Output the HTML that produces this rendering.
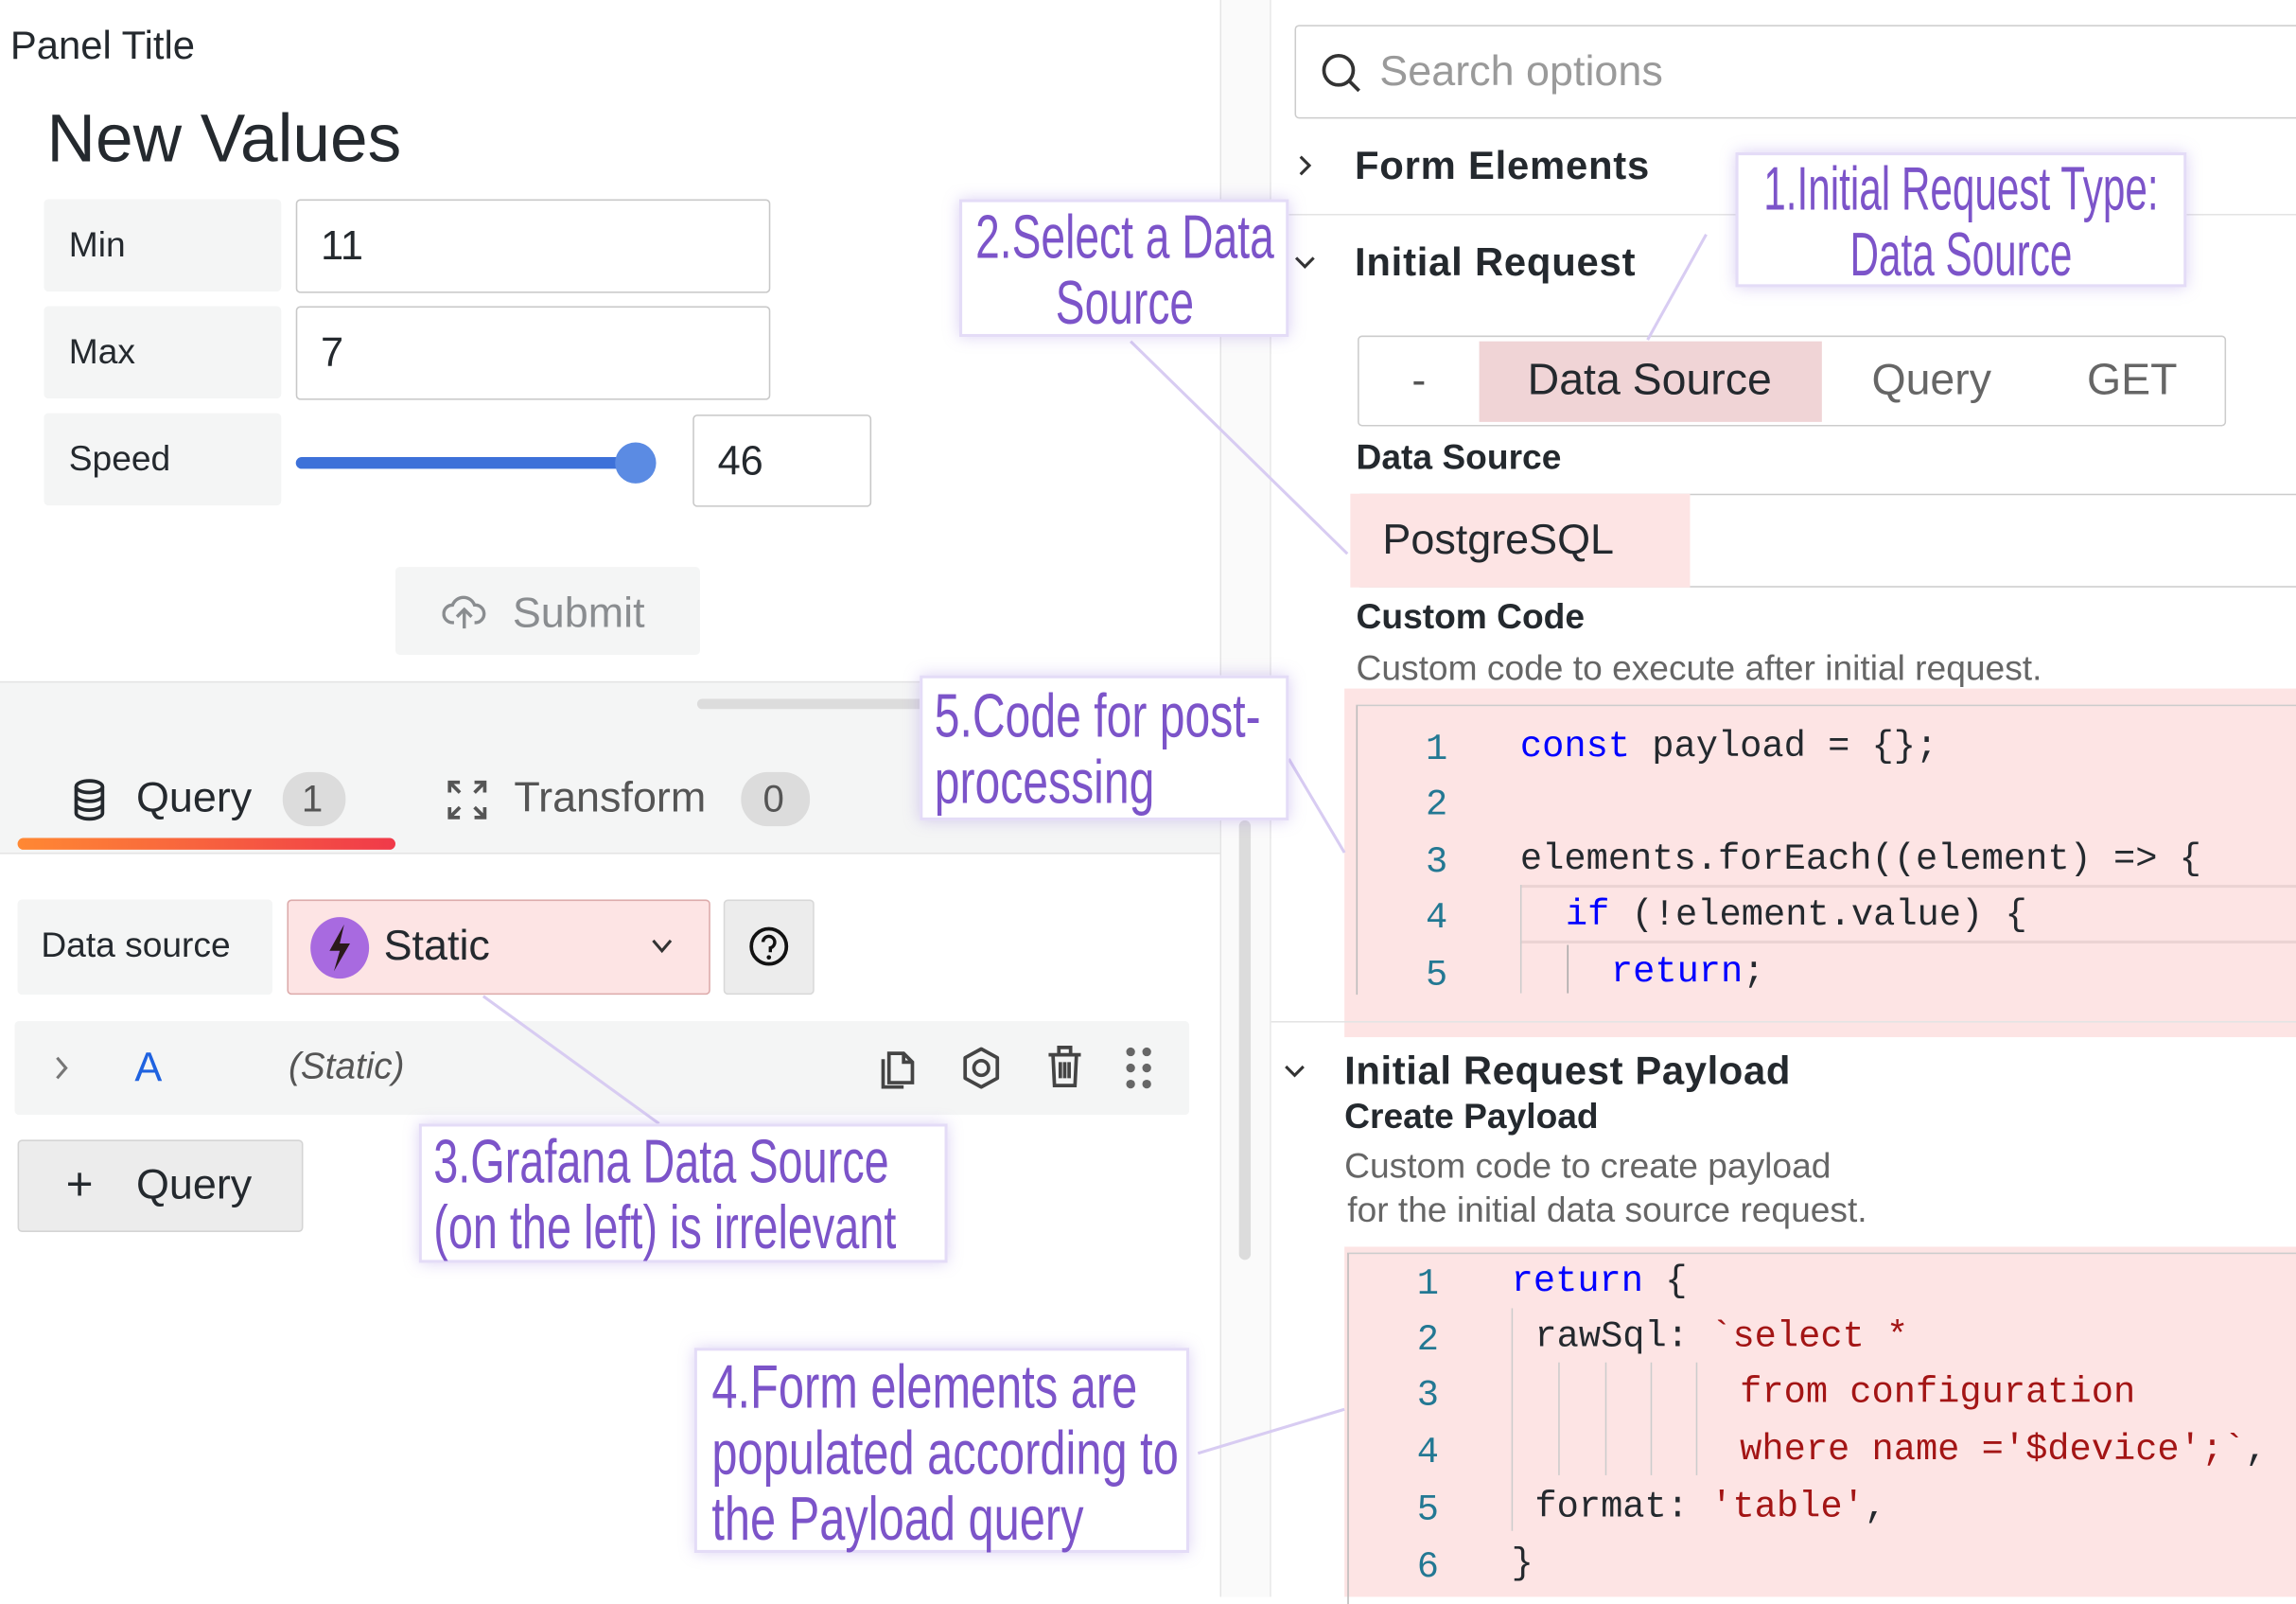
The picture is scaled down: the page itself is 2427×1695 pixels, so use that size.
<!DOCTYPE html>
<html><head><meta charset="utf-8"><style>
*{box-sizing:border-box;margin:0;padding:0}
html,body{width:2427px;height:1688px;overflow:hidden;background:#fff}
#w{position:absolute;left:0;top:0;width:1568px;height:1090px;transform:scale(1.5481);transform-origin:0 0;font-family:"Liberation Sans",sans-serif;color:#24292e}
.a{position:absolute}
.t{position:absolute;white-space:nowrap;line-height:1}
.lbl{position:absolute;background:#f4f5f5;border-radius:3px}
.inp{position:absolute;border:1px solid #c8c8c8;border-radius:3px;background:#fff}
.ann{position:absolute;background:#fff;border:2px solid #e4dcf7;box-shadow:0 0 10px rgba(150,120,220,.35);color:#7c54c9;font-family:"Liberation Sans",sans-serif;font-size:42px;line-height:45px;padding:2px 8px;overflow:visible}
.ann span{display:table;white-space:nowrap;transform:scaleX(var(--s));transform-origin:0 50%}
.ann.c span{position:relative;left:50%;transform:translateX(-50%) scaleX(var(--s));transform-origin:50% 50%}
.mono{font-family:"Liberation Mono","DejaVu Sans Mono",monospace;font-size:25px}
.ln{position:absolute;color:#237893;font-family:"Liberation Mono",monospace;font-size:25px;width:30px;text-align:center}
.kw{color:#0000ff}.st{color:#a31515}
</style></head><body><div id="w">

<!-- left top -->
<div class="t" style="left:7px;top:18px;font-size:27px;color:#24292e">Panel Title</div>
<div class="t" style="left:32px;top:71px;font-size:46px;color:#24292e">New Values</div>
<div class="lbl" style="left:30px;top:136px;width:162px;height:63px"></div>
<div class="t" style="left:47px;top:156px;font-size:24px">Min</div>
<div class="inp" style="left:202px;top:136px;width:324px;height:64px"></div>
<div class="t" style="left:219px;top:154px;font-size:28px">11</div>
<div class="lbl" style="left:30px;top:209px;width:162px;height:63px"></div>
<div class="t" style="left:47px;top:229px;font-size:24px">Max</div>
<div class="inp" style="left:202px;top:209px;width:324px;height:64px"></div>
<div class="t" style="left:219px;top:227px;font-size:28px">7</div>
<div class="lbl" style="left:30px;top:282px;width:162px;height:63px"></div>
<div class="t" style="left:47px;top:302px;font-size:24px">Speed</div>
<div class="a" style="left:202px;top:312px;width:232px;height:8px;background:#3d71d9;border-radius:4px"></div>
<div class="a" style="left:420px;top:302px;width:28px;height:28px;background:#5b8be3;border-radius:50%"></div>
<div class="inp" style="left:473px;top:283px;width:122px;height:63px"></div>
<div class="t" style="left:490px;top:301px;font-size:28px">46</div>
<div class="a" style="left:270px;top:387px;width:208px;height:60px;background:#f4f5f5;border-radius:3px"></div>
<svg class="a" style="left:302px;top:404px" width="30" height="28" viewBox="0 0 30 28"><path d="M8 21H7a6 6 0 0 1 0-12 8 8 0 0 1 15 0 6 6 0 0 1 1 12h-1M15 25V13M10 17l5-5 5 5" fill="none" stroke="#8a8d90" stroke-width="2.2"/></svg>
<div class="t" style="left:350px;top:405px;font-size:29px;color:#8a8d90">Submit</div>

<!-- left bottom -->
<div class="a" style="left:0;top:465px;width:833px;height:117px;background:#f4f5f5;border-top:1px solid #e4e4e4"></div>
<div class="a" style="left:476px;top:477px;width:160px;height:7px;background:#dcdcdc;border-radius:4px"></div>
<svg class="a" style="left:49px;top:531px" width="24" height="30" viewBox="0 0 24 30"><ellipse cx="12" cy="6" rx="9" ry="4" fill="none" stroke="#24292e" stroke-width="2.4"/><path d="M3 6v18c0 2 4 4 9 4s9-2 9-4V6M3 12c0 2 4 4 9 4s9-2 9-4M3 18c0 2 4 4 9 4s9-2 9-4" fill="none" stroke="#24292e" stroke-width="2.4"/></svg>
<div class="t" style="left:93px;top:531px;font-size:29px">Query</div>
<div class="a" style="left:193px;top:527px;width:43px;height:37px;border-radius:18px;background:#dcdcdc"></div>
<div class="t" style="left:206px;top:532px;font-size:26px;color:#555">1</div>
<svg class="a" style="left:304px;top:531px" width="30" height="30" viewBox="0 0 30 30"><path d="M3 10V3h7M20 3h7v7M27 20v7h-7M10 27H3v-7M3 3l7 7M27 3l-7 7M27 27l-7-7M3 27l7-7" fill="none" stroke="#555" stroke-width="2.4"/></svg>
<div class="t" style="left:351px;top:531px;font-size:29px;color:#555">Transform</div>
<div class="a" style="left:506px;top:527px;width:47px;height:37px;border-radius:18px;background:#dcdcdc"></div>
<div class="t" style="left:521px;top:532px;font-size:26px;color:#555">0</div>
<div class="a" style="left:12px;top:572px;width:258px;height:8px;border-radius:4px;background:linear-gradient(90deg,#ff8833,#f03a4a)"></div>
<div class="a" style="left:0;top:582px;width:833px;height:508px;background:#fff;border-top:1px solid #e4e4e4"></div>

<div class="lbl" style="left:12px;top:614px;width:174px;height:65px"></div>
<div class="t" style="left:28px;top:634px;font-size:24px">Data source</div>
<div class="a" style="left:196px;top:614px;width:289px;height:65px;background:#fde4e4;border:1px solid #dcaaaa;border-radius:3px"></div>
<div class="a" style="left:212px;top:626px;width:40px;height:42px;border-radius:50%;background:#a86ae0"></div>
<svg class="a" style="left:220px;top:629px" width="24" height="36" viewBox="0 0 24 36"><path d="M15 2L5 20h7l-4 14 11-19h-7z" fill="#2a1a1a"/></svg>
<div class="t" style="left:262px;top:632px;font-size:29px">Static</div>
<svg class="a" style="left:444px;top:640px" width="16" height="12" viewBox="0 0 16 12"><path d="M2 2l6 7 6-7" fill="none" stroke="#333" stroke-width="2"/></svg>
<div class="a" style="left:494px;top:614px;width:62px;height:65px;background:#ececec;border:1px solid #d8d8d8;border-radius:3px"></div>
<svg class="a" style="left:510px;top:631px" width="30" height="30" viewBox="0 0 30 30"><circle cx="15" cy="15" r="12" fill="none" stroke="#111" stroke-width="2.4"/><path d="M11 12a4 4 0 1 1 5 4v3" fill="none" stroke="#111" stroke-width="2.2"/><circle cx="15" cy="22.5" r="1.5" fill="#111"/></svg>

<div class="a" style="left:10px;top:697px;width:802px;height:64px;background:#f4f5f5;border-radius:3px"></div>
<svg class="a" style="left:36px;top:720px" width="12" height="18" viewBox="0 0 12 18"><path d="M3 2l6 7-6 7" fill="none" stroke="#777" stroke-width="2"/></svg>
<div class="t" style="left:92px;top:715px;font-size:28px;color:#1f62e0">A</div>
<div class="t" style="left:197px;top:716px;font-size:25px;color:#555;font-style:italic">(Static)</div>
<svg class="a" style="left:598px;top:713px" width="30" height="32" viewBox="0 0 30 32"><path d="M9 6h10l6 6v14H9zM19 6v6h6M5 10v19h14" fill="none" stroke="#444" stroke-width="2.4"/></svg>
<svg class="a" style="left:656px;top:714px" width="28" height="30" viewBox="0 0 28 30"><path d="M14 2l11 6v14l-11 6-11-6V8z" fill="none" stroke="#444" stroke-width="2.4" stroke-linejoin="round"/><circle cx="14" cy="15" r="5" fill="none" stroke="#444" stroke-width="2.4"/></svg>
<svg class="a" style="left:714px;top:712px" width="26" height="32" viewBox="0 0 26 32"><path d="M2 8h22M9 8V3h8v5M5 8l1 21h14l1-21M10 13v11M13 13v11M16 13v11" fill="none" stroke="#444" stroke-width="2.4"/></svg>
<svg class="a" style="left:768px;top:714px" width="20" height="30" viewBox="0 0 20 30"><g fill="#666"><circle cx="4" cy="4" r="3"/><circle cx="15" cy="4" r="3"/><circle cx="4" cy="15" r="3"/><circle cx="15" cy="15" r="3"/><circle cx="4" cy="26" r="3"/><circle cx="15" cy="26" r="3"/></g></svg>

<div class="a" style="left:12px;top:778px;width:195px;height:63px;background:#ececec;border:1px solid #d4d4d4;border-radius:3px"></div>
<div class="t" style="left:45px;top:792px;font-size:32px">+</div>
<div class="t" style="left:93px;top:795px;font-size:29px">Query</div>

<!-- divider column -->
<div class="a" style="left:833px;top:0;width:1px;height:1090px;background:#e4e4e4"></div>
<div class="a" style="left:834px;top:0;width:33px;height:1090px;background:#fafafa"></div>
<div class="a" style="left:846px;top:560px;width:8px;height:300px;background:#dcdcdc;border-radius:4px"></div>
<div class="a" style="left:867px;top:0;width:1px;height:1090px;background:#e8e8e8"></div>

<!-- right pane -->
<div class="a" style="left:884px;top:17px;width:700px;height:64px;border:1px solid #ccc;border-radius:3px"></div>
<svg class="a" style="left:901px;top:35px" width="30" height="30" viewBox="0 0 30 30"><circle cx="13" cy="13" r="10" fill="none" stroke="#333" stroke-width="2.4"/><path d="M20 20l7 7" stroke="#333" stroke-width="2.4"/></svg>
<div class="t" style="left:942px;top:35px;font-size:29px;color:#9a9a9a">Search options</div>
<svg class="a" style="left:885px;top:105px" width="12" height="16" viewBox="0 0 12 16"><path d="M3 2l6 6-6 6" fill="none" stroke="#333" stroke-width="2"/></svg>
<div class="t" style="left:925px;top:100px;font-size:27px;font-weight:bold;color:#24292e;letter-spacing:.5px">Form Elements</div>
<div class="a" style="left:868px;top:146px;width:700px;height:1px;background:#e4e4e4"></div>
<svg class="a" style="left:883px;top:174px" width="16" height="12" viewBox="0 0 16 12"><path d="M2 2l6 6 6-6" fill="none" stroke="#333" stroke-width="2"/></svg>
<div class="t" style="left:925px;top:166px;font-size:27px;font-weight:bold;letter-spacing:.5px">Initial Request</div>

<div class="a" style="left:927px;top:229px;width:593px;height:62px;border:1px solid #ccc;border-radius:3px"></div>
<div class="a" style="left:1010px;top:233px;width:234px;height:55px;background:#f0d4d6"></div>
<div class="t" style="left:964px;top:246px;font-size:29px;color:#555">-</div>
<div class="t" style="left:1043px;top:245px;font-size:30px;color:#24292e">Data Source</div>
<div class="t" style="left:1278px;top:245px;font-size:30px;color:#666">Query</div>
<div class="t" style="left:1425px;top:245px;font-size:30px;color:#666">GET</div>

<div class="t" style="left:926px;top:301px;font-size:24px;font-weight:bold">Data Source</div>
<div class="a" style="left:926px;top:337px;width:660px;height:64px;border:1px solid #ccc;border-radius:3px"></div>
<div class="a" style="left:922px;top:337px;width:232px;height:64px;background:#fde4e4"></div>
<div class="t" style="left:944px;top:355px;font-size:29px">PostgreSQL</div>
<div class="t" style="left:926px;top:410px;font-size:24px;font-weight:bold">Custom Code</div>
<div class="t" style="left:926px;top:445px;font-size:24px;color:#666">Custom code to execute after initial request.</div>

<div class="a" style="left:918px;top:470px;width:650px;height:238px;background:#fde4e4"></div>
<div class="a" style="left:926px;top:481px;width:650px;height:198px;border-left:1px solid #bbb;border-top:1px solid #ccc"></div>
<div class="a" style="left:1038px;top:604px;width:540px;height:40px;border-top:2px solid #ebd3d3;border-bottom:2px solid #ebd3d3"></div>
<div class="a" style="left:1038px;top:604px;width:1px;height:74px;background:#ccc"></div>
<div class="a" style="left:1070px;top:645px;width:1px;height:33px;background:#aaa"></div>
<div class="ln" style="left:966px;top:497px">1</div>
<div class="ln" style="left:966px;top:535px">2</div>
<div class="ln" style="left:966px;top:574px">3</div>
<div class="ln" style="left:966px;top:612px">4</div>
<div class="ln" style="left:966px;top:651px">5</div>
<div class="t mono" style="left:1038px;top:497px"><span class="kw">const</span> payload = {};</div>
<div class="t mono" style="left:1038px;top:574px">elements.forEach((element) =&gt; {</div>
<div class="t mono" style="left:1069px;top:612px"><span class="kw">if</span> (!element.value) {</div>
<div class="t mono" style="left:1100px;top:651px"><span class="kw">return</span>;</div>

<div class="a" style="left:868px;top:697px;width:700px;height:1px;background:#e4e4e4"></div>
<svg class="a" style="left:876px;top:726px" width="16" height="12" viewBox="0 0 16 12"><path d="M2 2l6 6 6-6" fill="none" stroke="#333" stroke-width="2"/></svg>
<div class="t" style="left:918px;top:718px;font-size:27px;font-weight:bold;letter-spacing:.4px">Initial Request Payload</div>
<div class="t" style="left:918px;top:751px;font-size:24px;font-weight:bold">Create Payload</div>
<div class="t" style="left:918px;top:785px;font-size:24px;color:#666">Custom code to create payload</div>
<div class="t" style="left:920px;top:815px;font-size:24px;color:#666">for the initial data source request.</div>

<div class="a" style="left:918px;top:851px;width:650px;height:239px;background:#fde4e4"></div>
<div class="a" style="left:920px;top:855px;width:650px;height:240px;border-left:1px solid #bbb;border-top:1px solid #ccc"></div>
<div class="a" style="left:1032px;top:893px;width:1px;height:152px;background:#ccc"></div>
<div class="a" style="left:1064px;top:930px;width:1px;height:77px;background:#ccc"></div>
<div class="a" style="left:1096px;top:930px;width:1px;height:77px;background:#ccc"></div>
<div class="a" style="left:1127px;top:930px;width:1px;height:77px;background:#ccc"></div>
<div class="a" style="left:1158px;top:930px;width:1px;height:77px;background:#ccc"></div>
<div class="ln" style="left:960px;top:862px">1</div>
<div class="ln" style="left:960px;top:900px">2</div>
<div class="ln" style="left:960px;top:938px">3</div>
<div class="ln" style="left:960px;top:977px">4</div>
<div class="ln" style="left:960px;top:1016px">5</div>
<div class="ln" style="left:960px;top:1055px">6</div>
<div class="t mono" style="left:1032px;top:862px"><span class="kw">return</span> {</div>
<div class="t mono" style="left:1048px;top:900px">rawSql: <span class="st">`select *</span></div>
<div class="t mono st" style="left:1188px;top:938px">from configuration</div>
<div class="t mono" style="left:1188px;top:977px"><span class="st">where name ='$device';`</span>,</div>
<div class="t mono" style="left:1048px;top:1016px">format: <span class="st">'table'</span>,</div>
<div class="t mono" style="left:1032px;top:1055px">}</div>

<!-- connectors -->
<svg class="a" style="left:0;top:0" width="1568" height="1090"><g stroke="#d8ccf2" stroke-width="2" fill="none"><path d="M1165 160L1125 232"/><path d="M772 233L920 378"/><path d="M880 518L918 582"/><path d="M330 680L450 767"/><path d="M818 992L918 962"/></g></svg>

<!-- annotations -->
<div class="ann c" style="left:1185px;top:104px;width:308px;height:92px;padding:0;--s:.65"><span>1.Initial Request Type:</span><span>Data Source</span></div>
<div class="ann c" style="left:655px;top:136px;width:225px;height:94px;padding:1px 0;--s:.71"><span>2.Select a Data</span><span>Source</span></div>
<div class="ann" style="left:628px;top:461px;width:252px;height:99px;padding:3px 8px;--s:.74"><span>5.Code for post-</span><span>processing</span></div>
<div class="ann" style="left:286px;top:767px;width:361px;height:95px;padding:1px 8px;--s:.72"><span>3.Grafana Data Source</span><span>(on the left) is irrelevant</span></div>
<div class="ann" style="left:474px;top:920px;width:338px;height:140px;padding:2px 10px;--s:.75"><span>4.Form elements are</span><span>populated according to</span><span>the Payload query</span></div>

</div></body></html>
